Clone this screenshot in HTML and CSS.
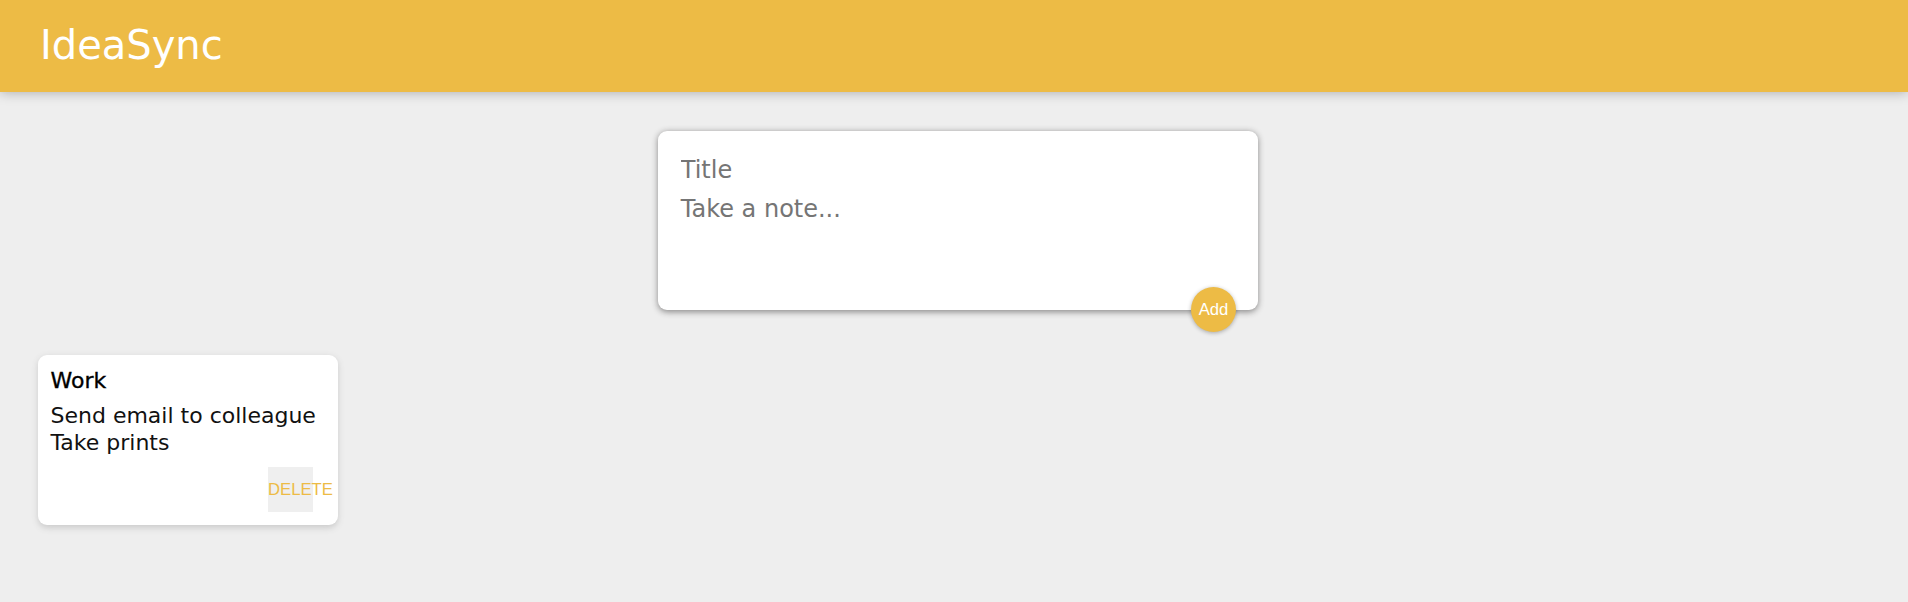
FILE: index.html
```
<!DOCTYPE html>
<html lang="en">
<head>
<meta charset="utf-8">
<title>IdeaSync</title>
<link rel="stylesheet" href="styles.css">
</head>
<body>
<header class="app-header">
  <h1 class="brand">IdeaSync</h1>
</header>
<main class="content">
  <form class="create-note">
    <input class="field field-title" name="title" placeholder="Title">
    <textarea class="field field-body" name="content" placeholder="Take a note..." rows="3"></textarea>
    <button class="add-btn" type="button">Add</button>
  </form>
  <section class="notes">
    <article class="note">
      <h2 class="note-title">Work</h2>
      <p class="note-text">Send email to colleague
Take prints</p>
      <div class="note-actions">
        <button class="delete-btn" type="button"><span>DELETE</span></button>
      </div>
    </article>
  </section>
</main>
</body>
</html>
```
FILE: styles.css
```
* { box-sizing: border-box; }

html, body {
  margin: 0;
  padding: 0;
}

body {
  background: #eeeeee;
  font-family: "DejaVu Sans", "Liberation Sans", sans-serif;
  min-height: 602px;
}

.app-header {
  background: #edbb45;
  height: 92px;
  padding: 0 40px;
  display: flex;
  align-items: center;
  box-shadow: 0 0 12px 0 rgba(0, 0, 0, 0.3);
  position: relative;
}

.brand {
  margin: 0;
  color: #ffffff;
  font-family: "DejaVu Sans", sans-serif;
  font-weight: 400;
  font-size: 40px;
  line-height: 1;
  padding-bottom: 2px;
}

.content {
  display: flex;
  flex-direction: column;
  padding-left: 8px;
}

.create-note {
  position: relative;
  width: 600px;
  margin: 39px auto 25px auto;
  background: #ffffff;
  padding: 18.75px;
  border-radius: 9px;
  box-shadow: 0 1.5px 6px rgb(138, 137, 137);
}

.field {
  display: block;
  width: 100%;
  border: none;
  outline: none;
  resize: none;
  background: transparent;
  font-family: "DejaVu Sans", sans-serif;
  font-size: 24px;
  color: #333;
  padding: 0 0 0 4px;
  margin: 0;
}

.field::placeholder {
  color: #757575;
  font-weight: 400;
}

.field-title {
  height: 40px;
  line-height: 40px;
}

.field-body {
  height: 101px;
  line-height: 29px;
  padding-top: 5px;
}

.add-btn {
  position: absolute;
  right: 22px;
  bottom: -22.5px;
  width: 45px;
  height: 45px;
  border-radius: 50%;
  border: none;
  background: #edbb45;
  color: #ffffff;
  font-family: "Liberation Sans", Arial, sans-serif;
  font-size: 16.7px;
  padding: 0;
  box-shadow: 0 1px 4px rgba(0, 0, 0, 0.3);
}

.notes {
  display: flex;
  flex-wrap: wrap;
  padding-left: 10px;
}

.note {
  width: 300px;
  margin: 20px;
  background: #ffffff;
  border-radius: 9px;
  padding: 12.5px 12.5px 12.5px 12.5px;
  box-shadow: 0 2.5px 6px #cccccc;
}

.note-title {
  margin: 0 0 7.5px 0;
  font-size: 22px;
  line-height: 27px;
  font-weight: 400;
  color: #000000;
  -webkit-text-stroke: 0.35px #000000;
}

.note-text {
  margin: 0 0 11.5px 0;
  font-size: 22px;
  line-height: 27px;
  color: #111111;
  white-space: pre-wrap;
}

.note-actions {
  display: flex;
  justify-content: flex-end;
  padding-right: 12.5px;
}

.delete-btn {
  width: 45px;
  height: 45px;
  border: none;
  padding: 0;
  background: #efefef;
  color: #edbb45;
  font-family: "Liberation Sans", Arial, sans-serif;
  font-size: 16.7px;
  display: flex;
  align-items: center;
  justify-content: flex-start;
  overflow: visible;
  white-space: nowrap;
}
```
